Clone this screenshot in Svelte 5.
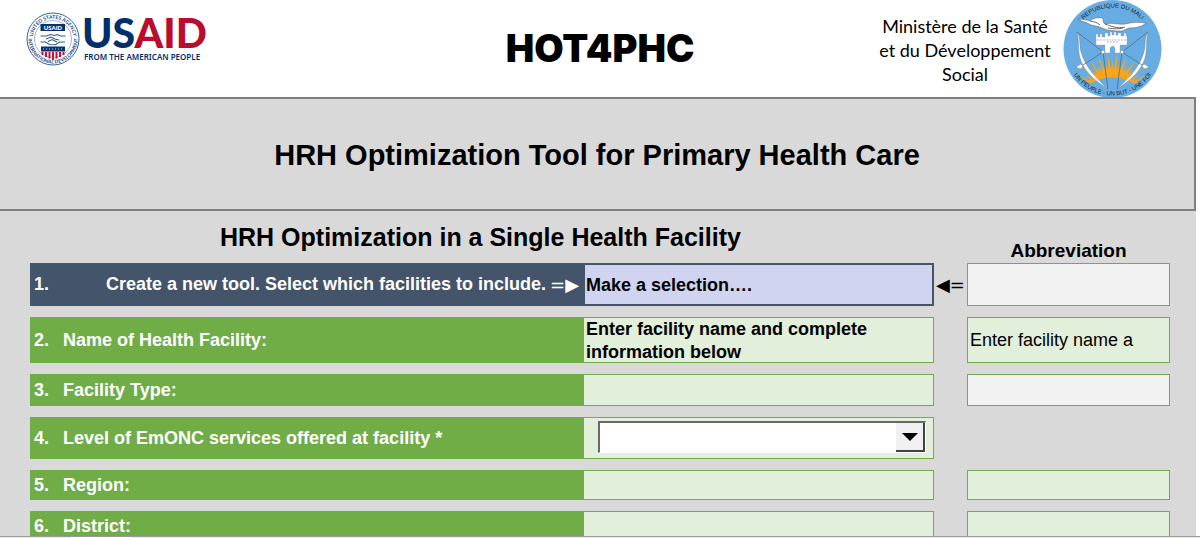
<script lang="ts">
  type Row = {
    label: string;
    size: string;
    kind: 'select' | 'name' | 'text' | 'combo';
    value: string;
    abbreviation?: string;
    muted?: boolean;
  };

  const rows: Row[] = [
    { label: 'Create a new tool. Select which facilities to include.', size: 'lg', kind: 'select', value: 'Make a selection….', abbreviation: '', muted: true },
    { label: 'Name of Health Facility:', size: 'xl', kind: 'name', value: 'Enter facility name and complete information below', abbreviation: 'Enter facility name a' },
    { label: 'Facility Type:', size: 'sm', kind: 'text', value: '', abbreviation: '', muted: true },
    { label: 'Level of EmONC services offered at facility *', size: 'md', kind: 'combo', value: '' },
    { label: 'Region:', size: 'xs', kind: 'text', value: '', abbreviation: '' },
    { label: 'District:', size: 'xs', kind: 'text', value: '', abbreviation: '' }
  ];

  // sun rays: long and short tips alternating above a shallow arc
  const rayCount = 19;
  let rays = '';
  for (let i = 0; i <= rayCount * 2; i++) {
    const angle = Math.PI * (1.15 + (0.7 * i) / (rayCount * 2));
    const radius = i % 2 === 0 ? 25 : i % 4 === 1 ? 41 : 33;
    rays += `${(49.5 + radius * Math.cos(angle)).toFixed(1)},${(95 + radius * Math.sin(angle)).toFixed(1)} `;
  }
</script>

<div class="workbook">
  <header class="banner">
    <svg class="usaid" viewBox="0 0 184 58" role="img" aria-label="USAID, from the American people">
      <defs>
        <path id="seal-top" d="M6.6 28a20.4 20.4 0 0 1 40.8 0" />
        <path id="seal-bottom" d="M2.6 24a24.7 24.7 0 1 0 48.8 0" />
      </defs>
      <circle cx="27" cy="28" r="26" fill="#fff" stroke="#3c6298" stroke-width="1" />
      <circle cx="27" cy="28" r="18.5" fill="none" stroke="#7c95ba" stroke-width="0.7" />
      <text class="seal-text"><textPath href="#seal-top" startOffset="50%" text-anchor="middle">UNITED STATES AGENCY</textPath></text>
      <text class="seal-text"><textPath href="#seal-bottom" startOffset="50%" text-anchor="middle">INTERNATIONAL DEVELOPMENT</textPath></text>
      <rect x="14.5" y="13" width="24.5" height="7" fill="#0b326c" />
      <text class="seal-name" x="27" y="18.8" text-anchor="middle">USAID</text>
      <path d="M14.5 25h6l4-1.5 4 1 3-1 3 1.5h5M14.5 31h5l4 2.5 6 .2 4-2.7h5.5M20 28l5-2 4 2 4 1M22 30.5l4-2 5 2.5" fill="none" stroke="#375b8c" stroke-width="1.1" />
      <path d="M15 35.5h24v5H15z" fill="#0b326c" />
      <path d="M17 38h20" stroke="#fff" stroke-width="0.8" stroke-dasharray="1 2" />
      <path d="M16.5 41v3M20 41v5M23.5 41v6.5M27 41v8M30.5 41v6.5M34 41v5M37.5 41v3" stroke="#c4113a" stroke-width="2" />
      <text class="wordmark" x="56" y="37"><tspan fill="#002f6c">US</tspan><tspan fill="#ba0c2f">AID</tspan></text>
      <text class="tagline" x="58" y="49">FROM THE AMERICAN PEOPLE</text>
    </svg>

    <h1>HOT4PHC</h1>

    <div class="ministry">
      <p>Ministère de la Santé et du Développement Social</p>
      <svg class="mali" viewBox="0 0 99 98" role="img" aria-label="République du Mali">
        <defs>
          <path id="mali-top" d="M8 49a41.5 41.5 0 0 1 83 0" />
          <path id="mali-bottom" d="M3 49a46.5 46.5 0 0 0 93 0" />
          <g id="bow">
            <path d="M14 32c4 6 2 13 4 20 4 15 16 27 27 37-14-9-27-20-29-36-1-7 0-14-2-21z" fill="#fff" stroke="#777" stroke-width="0.4" />
            <path d="M14 32l26 20 5 37M17 67l23-15" fill="none" stroke="#52606e" stroke-width="0.7" />
            <path d="M14 66l4-2 2 2-2 3-4-1zM38 51l3-1 1 3-3 1z" fill="#fff" stroke="#777" stroke-width="0.5" />
          </g>
        </defs>
        <circle cx="49.5" cy="49" r="49" fill="#67ade4" />
        <polygon points={rays} fill="#f9a51a" />
        <path d="M26 84.5Q49.5 70 73 84.5z" fill="#67ade4" />
        <path d="M15 19c5 0 9 1 12 2 2-2 6-4 12-3 2 1 0 4 3 6 7-2 13 1 20 0 8-2 14-2 21-1-4 4-11 5-17 5l-7 3c-7 0-14 0-20-3-4-2-7-2-11-3-4-3-9-3-13-6z" fill="#fff" stroke="#555" stroke-width="0.5" />
        <path d="M27 21c4 1 7 1 10 4M42 24c6 2 12 5 20 3M45 28c7 1 11 1 15 0" fill="none" stroke="#444" stroke-width="0.8" />
        <path d="M33 34h2v3h2v-3h2v3h3v-4h3v3h2v-4h2v3h2v-3h2v3h2v-2h3v3h3v-3h2v3h1v9h-7v8h-5v-5q-2-4-5 0v5h-5v-8h-9z" fill="#fff" stroke="#999" stroke-width="0.4" />
        <path d="M34 40h30M44 42h11" stroke="#8d9aa5" stroke-width="0.7" stroke-dasharray="2 1" />
        <use href="#bow" />
        <use href="#bow" transform="translate(99 0) scale(-1 1)" />
        <text class="mali-text"><textPath href="#mali-top" startOffset="50%" text-anchor="middle">REPUBLIQUE DU MALI</textPath></text>
        <text class="mali-text"><textPath href="#mali-bottom" startOffset="50%" text-anchor="middle">UN PEUPLE - UN BUT - UNE FOI</textPath></text>
      </svg>
    </div>
  </header>

  <main class="sheet">
    <div class="title"><h2>HRH Optimization Tool for Primary Health Care</h2></div>

    <form class="form">
      <div class="row heads">
        <h3>HRH Optimization in a Single Health Facility</h3>
        <span class="abbr-head" id="abbr-head">Abbreviation</span>
      </div>

      {#each rows as row, i}
        <div class="row {row.size}">
          <label class="label" class:primary={i === 0} for="field-{i}">
            <span class="number">{i + 1}.</span>
            <span class="text">{row.label}</span>
            {#if i === 0}<span class="arrow">=▶</span>{/if}
          </label>

          {#if row.kind === 'select'}
            <select class="cell choice" id="field-{i}">
              <option>{row.value}</option>
            </select>
          {:else if row.kind === 'name'}
            <textarea class="cell name" id="field-{i}" rows="2" spellcheck="false" value={row.value}></textarea>
          {:else if row.kind === 'combo'}
            <div class="cell combo">
              <select id="field-{i}"><option></option></select>
              <span class="drop" aria-hidden="true">
                <svg viewBox="0 0 16 8"><path d="M0 0h16L8 8z" /></svg>
              </span>
            </div>
          {:else}
            <input class="cell" id="field-{i}" type="text" value={row.value} />
          {/if}

          <span class="arrow">{i === 0 ? '◀=' : ''}</span>

          {#if row.abbreviation !== undefined}
            <input class="cell abbr" class:muted={row.muted} type="text" aria-labelledby="abbr-head" value={row.abbreviation} />
          {/if}
        </div>
      {/each}
    </form>
  </main>

  <footer class="tabs"><span class="tab"></span></footer>
</div>

<style>
  :global(body) {
    background: #fff;
  }

  .workbook {
    display: flex;
    flex-direction: column;
    height: 100vh;
    overflow: hidden;
    font-family: "Liberation Sans", Arial, sans-serif;
    color: #000;
  }

  h1, h2, h3, p {
    margin: 0;
  }

  .banner {
    flex: none;
    display: grid;
    grid-template-columns: 1fr auto 1fr;
    align-items: center;
    height: 97px;
    padding: 0 26px;
  }

  .usaid {
    width: 184px;
    height: 58px;
    margin-bottom: 18px;
    overflow: visible;
  }

  .seal-text {
    font: 700 5px Lato, sans-serif;
    fill: #1d4780;
  }

  .seal-name {
    font: 900 6px Lato, sans-serif;
    fill: #fff;
  }

  .wordmark {
    font: 900 41px Lato, sans-serif;
  }

  .tagline {
    font: 600 8px "Noto Sans", sans-serif;
    fill: #002f6c;
  }

  h1 {
    padding-bottom: 2px;
    font: 900 38px/40px Inter, sans-serif;
  }

  .ministry {
    display: flex;
    align-items: center;
    justify-content: flex-end;
    gap: 8px;
    padding-right: 12px;
  }

  .ministry p {
    width: 180px;
    padding-top: 2px;
    font: 18px/24px Lato, sans-serif;
    text-align: center;
  }

  .mali {
    flex: none;
    width: 99px;
    height: 98px;
  }

  .mali-text {
    font: 6px "Liberation Sans", sans-serif;
    fill: #15202b;
  }

  .sheet {
    flex: 1;
    min-height: 0;
    margin-right: 4px;
    overflow: hidden;
    background: #d9d9d9;
  }

  .title {
    display: flex;
    align-items: center;
    justify-content: center;
    box-sizing: border-box;
    height: 114px;
    padding-top: 2px;
    border: 2px solid #7f7f7f;
    border-left: 0;
  }

  h2 {
    font-size: 29px;
    line-height: 32px;
  }

  .form {
    display: flex;
    flex-direction: column;
    gap: 11px;
    padding: 0 26px 0 30px;
  }

  .row {
    display: grid;
    grid-template-columns: 553fr 351fr 33px 203fr;
  }

  .heads {
    height: 52px;
    margin-bottom: -11px;
  }

  h3 {
    grid-column: 1 / 4;
    padding: 12px 0 0 190px;
    font-size: 25px;
    line-height: 28px;
  }

  .abbr-head {
    align-self: end;
    font-size: 19px;
    font-weight: 700;
    line-height: 24px;
    text-align: center;
  }

  .xs { height: 30px; }
  .sm { height: 32px; }
  .md { height: 42px; }
  .lg { height: 43px; }
  .xl { height: 46px; }

  .label {
    display: flex;
    align-items: center;
    padding: 0 4px;
    background: #70ad47;
    color: #fff;
    font-size: 18px;
    font-weight: 700;
    white-space: nowrap;
  }

  .number {
    width: 29px;
  }

  .primary {
    background: #44546a;
  }

  .primary .text {
    flex: 1;
    padding-right: 4px;
    text-align: right;
  }

  .arrow {
    align-self: center;
    font: 18px/20px "DejaVu Sans", sans-serif;
    text-align: center;
    white-space: nowrap;
  }

  .cell {
    box-sizing: border-box;
    width: 100%;
    height: 100%;
    min-width: 0;
    margin: 0;
    padding: 0 2px;
    border: 1px solid #70ad47;
    border-radius: 0;
    outline: 0;
    background: #e2efda;
    color: #000;
    font: 700 18px "Liberation Sans", Arial, sans-serif;
  }

  .choice {
    appearance: none;
    padding: 0 1px;
    border: 2px solid #44546a;
    background: #d0d4f0;
  }

  .name {
    display: block;
    line-height: 23px;
    resize: none;
    overflow: hidden;
  }

  .combo {
    position: relative;
    padding: 3px 7px 4px 14px;
  }

  .combo select {
    display: block;
    appearance: none;
    width: 100%;
    height: 32px;
    border: 1px solid #fff;
    border-top: 2px solid #696969;
    border-left: 2px solid #696969;
    border-radius: 0;
    background: #fff;
  }

  .drop {
    position: absolute;
    top: 5px;
    right: 8px;
    display: flex;
    align-items: center;
    justify-content: center;
    box-sizing: border-box;
    width: 29px;
    height: 29px;
    border-right: 2px solid #444;
    border-bottom: 2px solid #444;
    background: #f0f0f0;
    pointer-events: none;
  }

  .drop svg {
    width: 16px;
    height: 8px;
  }

  .abbr {
    font-weight: 400;
  }

  .muted {
    background: #f2f2f2;
  }

  .tabs {
    flex: none;
    height: 1px;
    padding-left: 70px;
    border-top: 1px solid #9b9b9b;
    background: #e6e6e6;
  }

  .tab {
    display: block;
    width: 62px;
    height: 1px;
    background: #fff;
  }
</style>
